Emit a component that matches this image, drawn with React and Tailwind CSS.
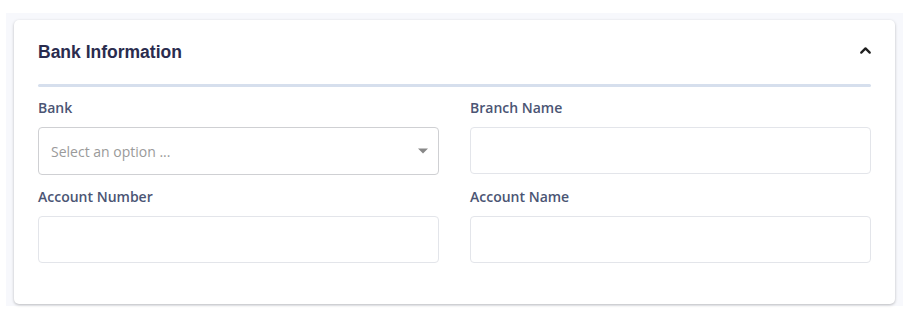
import { ChevronUp } from "lucide-react";

const Label = ({ children }) => (
  <label className="block text-[14px] font-semibold leading-5 text-[#4b5574]">{children}</label>
);

const Field = ({ label, children }) => (
  <div className="flex flex-col gap-[9px]">
    <Label>{label}</Label>
    {children}
  </div>
);

const TextBox = () => (
  <input
    type="text"
    className="h-[47px] w-full rounded border border-[#e3e5ea] bg-white px-3 text-[14px] outline-none"
  />
);

export default function App() {
  return (
    <div className="h-[317px] bg-white pt-[13px] pl-[6px] pr-[7px]" style={{ fontFamily: "'Open Sans', sans-serif" }}>
      <div className="h-[293px] bg-[#f7f8fc] px-2 pt-[7px]">
        <div className="h-[284px] rounded-[5px] bg-white px-6 shadow-[0_1px_3px_rgba(0,0,0,0.25)]">
          <div className="flex h-[64px] items-center justify-between">
            <h2 className="text-[17.5px] font-bold text-[#2a2c4e]" style={{ fontFamily: "'Liberation Sans', Arial, sans-serif" }}>
              Bank Information
            </h2>
            <ChevronUp size={17} strokeWidth={3.2} className="mb-[3px] mr-[-3px] text-[#1f1f1f]" />
          </div>
          <div className="h-[3px] rounded-full bg-[#d6dfed]" />
          <div className="mt-[11px] grid grid-cols-2 gap-x-[31px] gap-y-[12px]">
            <Field label="Bank">
              <div className="relative">
                <div className="flex h-[48px] w-full items-center rounded border border-[#cfd0d3] bg-white px-3 text-[14px] text-[#9a9a9a]">
                  Select an option ...
                </div>
                <span className="pointer-events-none absolute right-[11px] top-1/2 -translate-y-1/2 border-x-[5px] border-t-[5px] border-x-transparent border-t-[#888]" />
              </div>
            </Field>
            <Field label="Branch Name">
              <TextBox />
            </Field>
            <Field label="Account Number">
              <TextBox />
            </Field>
            <Field label="Account Name">
              <TextBox />
            </Field>
          </div>
        </div>
      </div>
    </div>
  );
}
